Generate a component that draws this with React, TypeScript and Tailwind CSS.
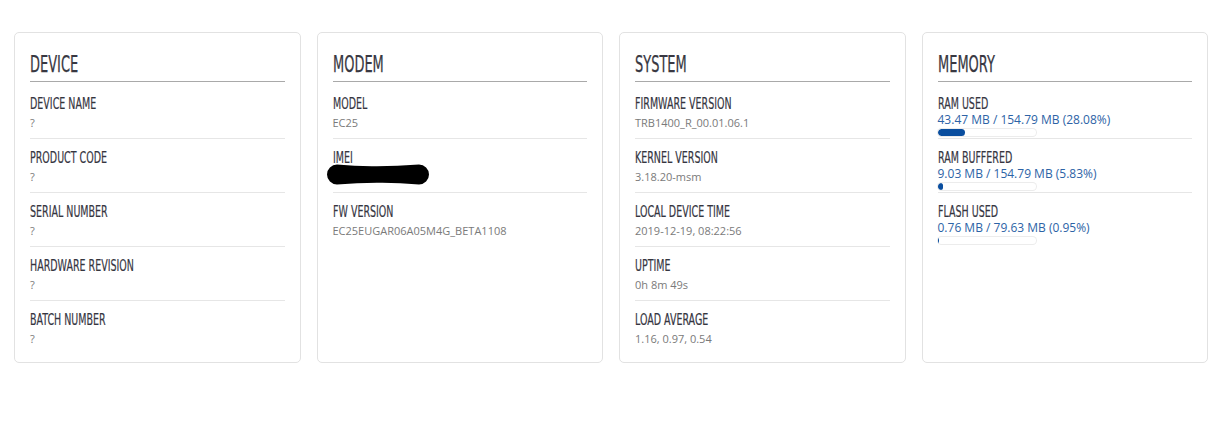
import React from "react";

type Row = { label: string; value?: string; redacted?: boolean };
type MemRow = { label: string; value: string; pct: number };

const cond = { fontFamily: '"Liberation Sans Narrow", "DejaVu Sans Condensed", sans-serif' };
const body = { fontFamily: '"Open Sans", "Liberation Sans", sans-serif' };

function Heading({ title }: { title: string }) {
  return (
    <div className="pt-[17px] pb-[3px] mb-[3px] border-b border-[#a9a9a9]">
      <span
        className="inline-block origin-left scale-x-[0.627] text-[23px] leading-[28px] text-[#383842] whitespace-nowrap [-webkit-text-stroke:0.25px_#383842]"
        style={cond}
      >
        {title}
      </span>
    </div>
  );
}

function Label({ text }: { text: string }) {
  return (
    <div className="h-[18px]">
      <span
        className="inline-block origin-left scale-x-[0.682] text-[15.5px] leading-[18px] text-[#35353f] whitespace-nowrap [-webkit-text-stroke:0.18px_#35353f]"
        style={cond}
      >
        {text}
      </span>
    </div>
  );
}

function Redaction() {
  return (
    <svg
      className="absolute left-[-6px] top-[-5px]"
      width="102"
      height="21"
      viewBox="0 0 102 21"
    >
      <path
        d="M10 0.5 Q30 2.5 50 2.2 Q70 2 92 0.5 A10 10 0 0 1 92 20.5 Q70 18.5 50 18.8 Q30 19 10 20.5 A10 10 0 0 1 10 0.5 Z"
        fill="#000"
      />
    </svg>
  );
}

function InfoRow({ row, last }: { row: Row; last: boolean }) {
  return (
    <div className={`pt-[6px] pb-[7px] ${last ? "" : "border-b border-[#e6e6e6]"}`}>
      <Label text={row.label} />
      <div className="relative mt-[6px] h-[16px] text-[11px] leading-[16px] text-[#7a7a7a]" style={body}>
        {row.redacted ? <Redaction /> : row.value}
      </div>
    </div>
  );
}

function MemoryRow({ row, last }: { row: MemRow; last: boolean }) {
  return (
    <div className={`pt-[6px] pb-[2px] ${last ? "" : "border-b border-[#e6e6e6]"}`}>
      <Label text={row.label} />
      <div className="mt-[3px] h-[16px] text-[12px] leading-[16px] text-[#2d63a6]" style={body}>
        {row.value}
      </div>
      <div className="mt-[1px] h-[7px] w-[98px] rounded-full bg-white shadow-[0_0_0_1px_#ececec] overflow-hidden">
        <div className="h-full rounded-full bg-[#0a4e9f]" style={{ width: `${Math.max(row.pct, 1.2)}%` }} />
      </div>
    </div>
  );
}

function Card({ title, children }: { title: string; children: React.ReactNode }) {
  return (
    <div className="rounded-[5px] border border-[#e2e2e2] bg-white px-[15px] pb-[8px]">
      <Heading title={title} />
      {children}
    </div>
  );
}

const device: Row[] = [
  { label: "DEVICE NAME", value: "?" },
  { label: "PRODUCT CODE", value: "?" },
  { label: "SERIAL NUMBER", value: "?" },
  { label: "HARDWARE REVISION", value: "?" },
  { label: "BATCH NUMBER", value: "?" },
];

const modem: Row[] = [
  { label: "MODEL", value: "EC25" },
  { label: "IMEI", redacted: true },
  { label: "FW VERSION", value: "EC25EUGAR06A05M4G_BETA1108" },
];

const system: Row[] = [
  { label: "FIRMWARE VERSION", value: "TRB1400_R_00.01.06.1" },
  { label: "KERNEL VERSION", value: "3.18.20-msm" },
  { label: "LOCAL DEVICE TIME", value: "2019-12-19, 08:22:56" },
  { label: "UPTIME", value: "0h 8m 49s" },
  { label: "LOAD AVERAGE", value: "1.16, 0.97, 0.54" },
];

const memory: MemRow[] = [
  { label: "RAM USED", value: "43.47 MB / 154.79 MB (28.08%)", pct: 28.08 },
  { label: "RAM BUFFERED", value: "9.03 MB / 154.79 MB (5.83%)", pct: 5.83 },
  { label: "FLASH USED", value: "0.76 MB / 79.63 MB (0.95%)", pct: 0.95 },
];

export default function App() {
  return (
    <div className="min-h-[445px] w-full bg-white pl-[14px] pr-[24px] pt-[32px]">
      <div className="grid grid-cols-4 items-stretch gap-4">
        <Card title="DEVICE">
          {device.map((r, i) => (
            <InfoRow key={r.label} row={r} last={i === device.length - 1} />
          ))}
        </Card>
        <Card title="MODEM">
          {modem.map((r, i) => (
            <InfoRow key={r.label} row={r} last={i === modem.length - 1} />
          ))}
        </Card>
        <Card title="SYSTEM">
          {system.map((r, i) => (
            <InfoRow key={r.label} row={r} last={i === system.length - 1} />
          ))}
        </Card>
        <Card title="MEMORY">
          {memory.map((r, i) => (
            <MemoryRow key={r.label} row={r} last={i === memory.length - 1} />
          ))}
        </Card>
      </div>
    </div>
  );
}
